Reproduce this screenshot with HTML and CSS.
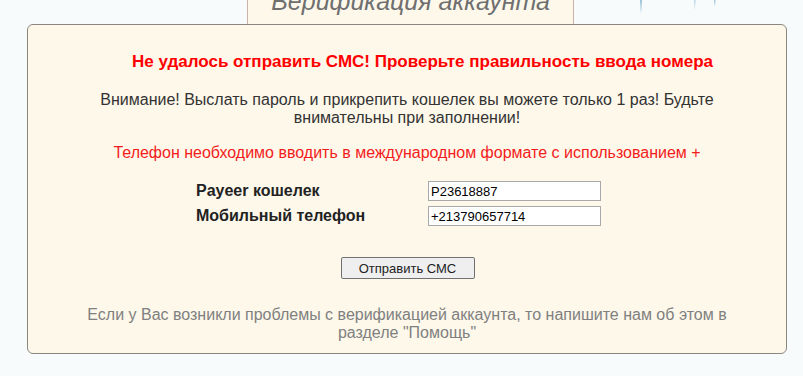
FILE: index.html
```html
<!DOCTYPE html>
<html lang="ru">
<head>
<meta charset="utf-8">
<link rel="stylesheet" href="styles.css">
</head>
<body>
<div class="page">
  <div class="top">
    <div class="tab">Верификация аккаунта</div>
    <svg class="drips" width="120" height="40" viewBox="0 0 120 40">
      <path d="M20 0 L21 14 L22 0 Z" fill="#9cc3d8"/>
      <path d="M74 0 L75 10 L75.5 0 Z" fill="#b6d3e2"/>
      <path d="M94 0 L95 7 L95.5 0 Z" fill="#9cc3d8"/>
    </svg>
  </div>
  <div class="box">
    <p class="error">Не удалось отправить СМС! Проверьте правильность ввода номера</p>
    <p class="note">Внимание! Выслать пароль и прикрепить кошелек вы можете только 1 раз! Будьте внимательны при заполнении!</p>
    <p class="hint">Телефон необходимо вводить в международном формате с использованием +</p>
    <div class="form">
      <div class="row"><span class="label">Payeer кошелек</span><input class="field" type="text" value="P23618887"></div>
      <div class="row"><span class="label">Мобильный телефон</span><input class="field" type="text" value="+213790657714"></div>
    </div>
    <div class="actions"><button class="btn" type="button">Отправить СМС</button></div>
    <p class="help">Если у Вас возникли проблемы с верификацией аккаунта, то напишите нам об этом в разделе "Помощь"</p>
  </div>
</div>
</body>
</html>
```
FILE: styles.css
```css
html, body {
  margin: 0;
  padding: 0;
  background: #f8fbfc;
  font-family: "Liberation Sans", Arial, sans-serif;
}
.page {
  width: 803px;
  height: 376px;
  overflow: hidden;
}
.top {
  position: relative;
  height: 24px;
}
.tab {
  position: absolute;
  left: 247px;
  top: -20px;
  width: 327px;
  height: 44px;
  box-sizing: border-box;
  border: 1px solid #c9b2aa;
  border-bottom: none;
  background: #fdf8ea;
  color: #6f6f6f;
  font-style: italic;
  font-size: 25px;
  text-align: center;
  line-height: 40px;
  z-index: 2;
}
.drips {
  position: absolute;
  left: 620px;
  top: 0;
}
.box {
  margin-left: 27px;
  width: 760px;
  height: 330px;
  box-sizing: border-box;
  border: 1px solid #8a8680;
  border-radius: 6px;
  background: #fdf8ea;
  text-align: center;
  padding-top: 27px;
  position: relative;
  z-index: 1;
}
.box p { margin: 0; }
.error {
  color: #f00;
  font-weight: bold;
  font-size: 17px;
  line-height: 20px;
  padding-left: 31px;
}
.note {
  color: #333;
  font-size: 16px;
  line-height: 18px;
  margin-top: 19px !important;
  padding: 0 60px;
}
.hint {
  color: #f31c1c;
  font-size: 16px;
  line-height: 18px;
  margin-top: 17px !important;
}
.form {
  margin-top: 19px;
  display: flex;
  flex-direction: column;
  gap: 5px;
  align-items: flex-start;
  padding-left: 168px;
}
.row {
  display: flex;
  align-items: center;
  height: 20px;
}
.label {
  width: 232px;
  text-align: left;
  font-weight: bold;
  font-size: 16px;
  color: #222;
}
.field {
  width: 173px;
  height: 20px;
  box-sizing: border-box;
  border: 1px solid #a9a9a9;
  background: #fff;
  font-family: "Liberation Sans", Arial, sans-serif;
  font-size: 13px;
  padding: 0 2px;
  margin: 0;
  color: #000;
}
.actions {
  margin-top: 31px;
  display: flex;
  justify-content: center;
  padding-left: 1px;
}
.btn {
  width: 134px;
  height: 22px;
  border: 1px solid #707070;
  border-radius: 2px;
  background: #efefef;
  font-family: "Liberation Sans", Arial, sans-serif;
  font-size: 13px;
  color: #222;
  padding: 0;
}
.help {
  color: #808080;
  font-size: 16px;
  line-height: 18px;
  margin-top: 27px !important;
  padding: 0 50px;
}
```
